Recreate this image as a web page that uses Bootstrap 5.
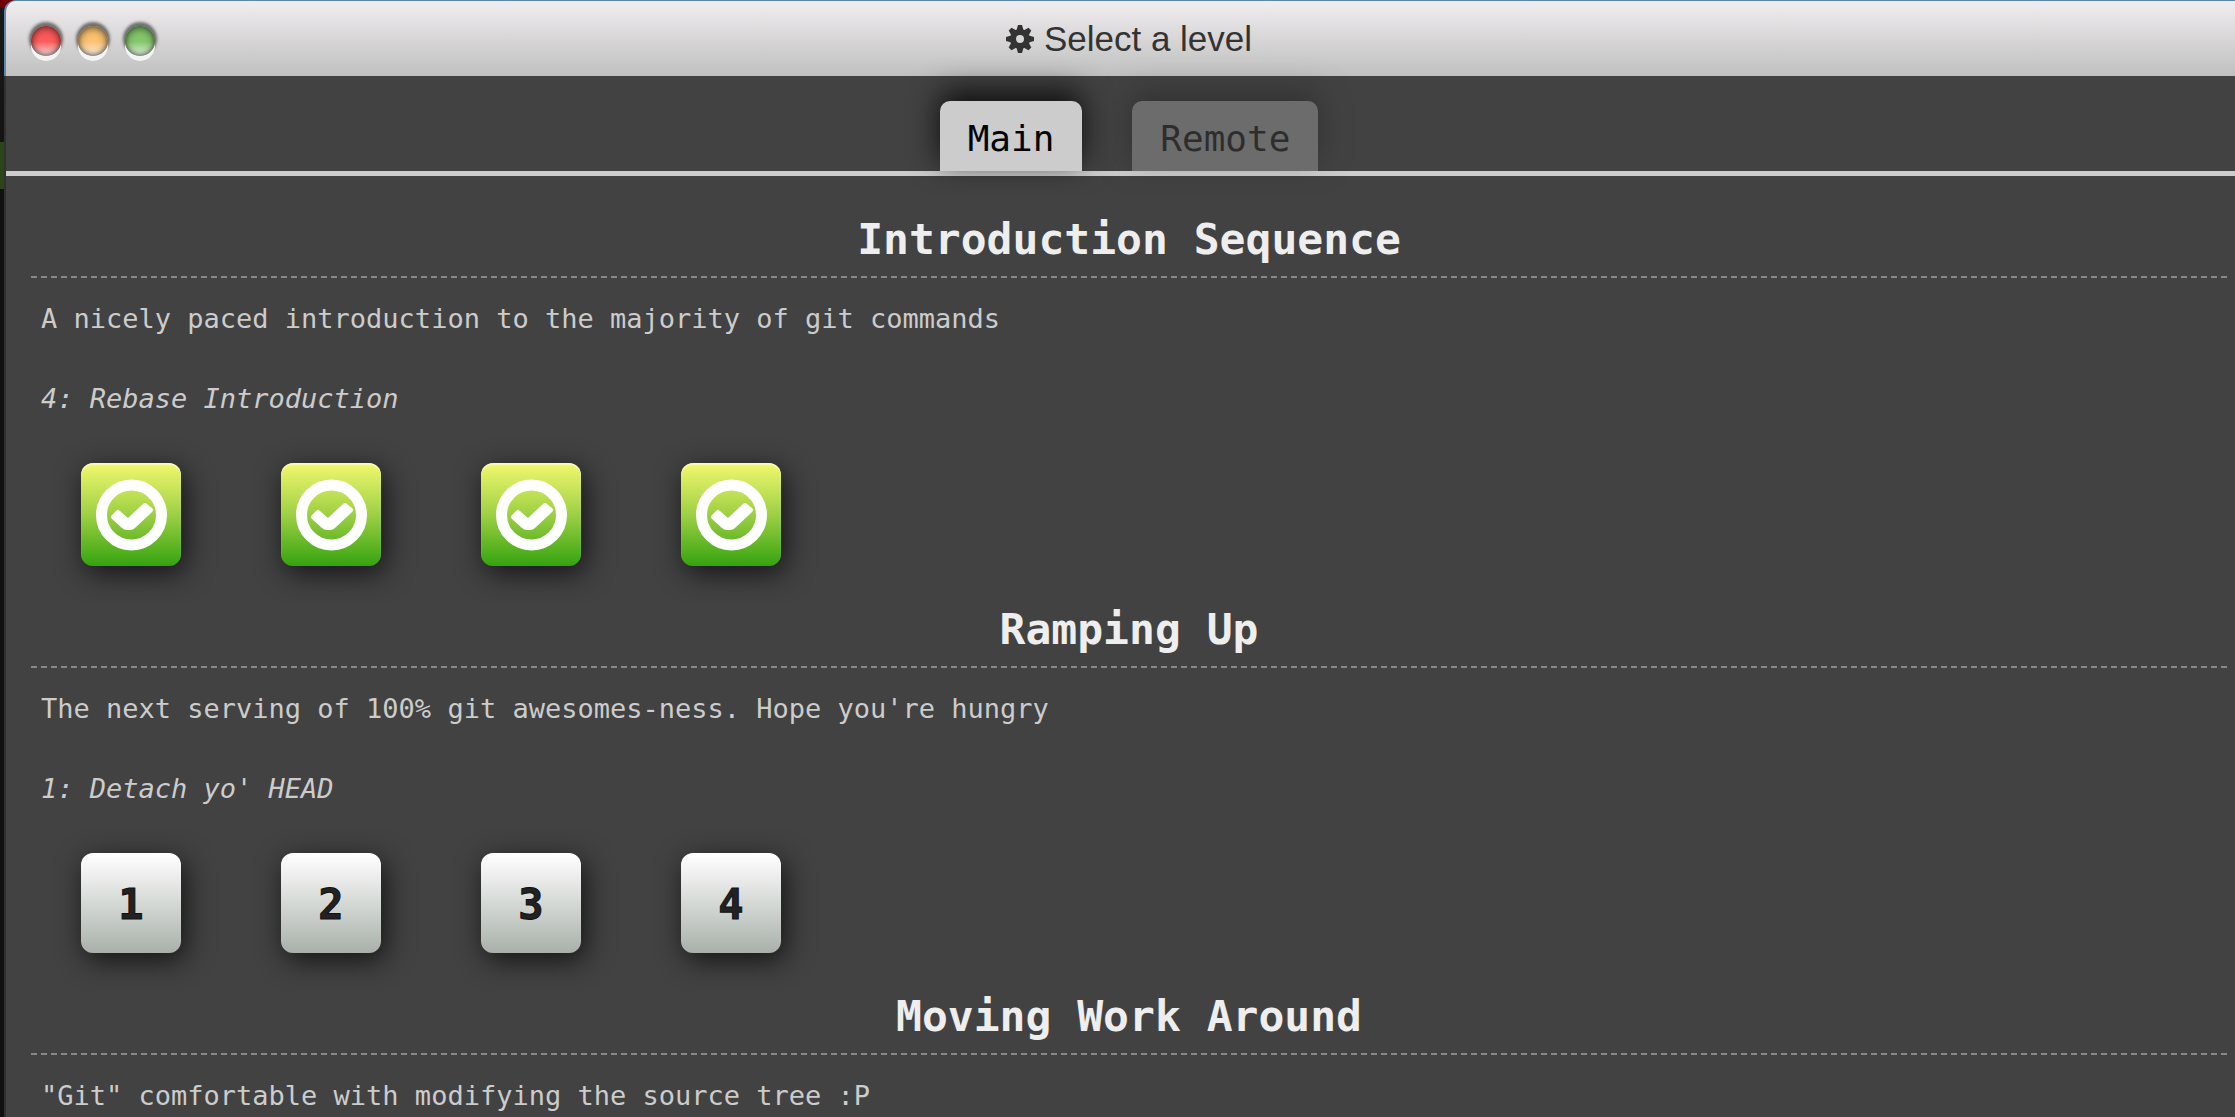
<!DOCTYPE html>
<html lang="en">
<head>
<meta charset="utf-8">
<meta name="viewport" content="width=device-width, initial-scale=1">
<title>Select a level</title>
<link href="https://cdn.jsdelivr.net/npm/bootstrap@5.3.0/dist/css/bootstrap.min.css" rel="stylesheet">
<style>
  body { background: #141414; overflow: hidden; }
  .backdrop { position: absolute; left: 0; top: 0; width: 16px; height: 100%;
    background: linear-gradient(#700000 8px, #191919 8px, #131313 142px, #2b4418 142px, #2b4418 189px, #111 189px); }
  .level-window { margin-left: 4px; margin-right: -17px; position: relative; }
  .title-bar { display: grid; grid-template-columns: 1fr auto 1fr; height: 76px;
    border-top: 1px solid #5f86ad; border-left: 2px solid #5f86ad; border-top-left-radius: 12px;
    background: linear-gradient(#f0edef, #c0c0c0); color: #333; }
  .title-text { font: 35px/40px "Liberation Sans", Arial, sans-serif; gap: 10px; }
  .lights { gap: 17px; padding-left: 25px; padding-top: 4px; }
  .light { width: 30px; height: 30px; border: 0; padding: 0; border-radius: 50%;
    box-shadow: 0 5px 0 #f4f4f4, 0 -2px 3px 2px rgba(0,0,0,.5), inset 0 2px 8px rgba(0,0,0,.55), inset 0 -1px 4px rgba(0,0,0,.4); }
  .light-close { background: linear-gradient(#ff5b5b 52%, #f4e4e4); }
  .light-min { background: linear-gradient(#fcc272 52%, #f4eee4); }
  .light-max { background: linear-gradient(#84c86c 52%, #e8f0e4); }
  .pane { background: #424242; border-left: 2px solid #303030; min-height: calc(100vh - 76px); }
  .mono { font-family: "DejaVu Sans Mono", monospace; }
  .tab-row { border-bottom: 5px solid #ccc; padding-top: 25px; gap: 50px; }
  .level-tab { border: 0; background: #ccc; color: #000; font-size: 36px; line-height: 54px; padding: 11px 28px 5px;
    border-radius: 10px 10px 0 0; box-shadow: 0 -9px 30px rgba(0,0,0,.8); }
  .level-tab.inactive { opacity: .3; }
  .sequence { padding: 34px 25px 0; }
  .sequence h2 { font-size: 43px; line-height: 58px; font-weight: 700; color: #eee;
    border-bottom: 2px dashed #888; padding-bottom: 8px; margin-bottom: 21px; }
  .sequence p { font-size: 27px; line-height: 40px; color: #ccc; margin: 0 0 40px; padding-left: 10px; }
  .sequence p.current { margin-bottom: 44px; }
  .tiles { gap: 100px; padding-left: 50px; }
  .tile { width: 100px; height: 100px; border: 0; padding: 2px 0 0; border-radius: 12px; font-size: 42px; font-weight: 700;
    color: #222; -webkit-text-stroke: 1px #111; background: linear-gradient(#fff, #eee 22%, #d0d5d1 55%, #a9b0a9);
    box-shadow: 4px 7px 28px rgba(0,0,0,.7); }
  .tile.solved { height: 103px; padding: 0; background: linear-gradient(#f2f86e, #9ed044 50%, #35a310);
    box-shadow: inset 0 2px 1px rgba(255,255,255,.5), 4px 7px 28px rgba(0,0,0,.7); }
</style>
<script src="https://cdn.jsdelivr.net/npm/bootstrap@5.3.0/dist/js/bootstrap.bundle.min.js"></script>
</head>
<body>
<svg class="d-none" xmlns="http://www.w3.org/2000/svg">
  <symbol id="check" viewBox="0 0 72 72">
    <circle cx="36.500" cy="36" r="30" fill="none" stroke="#fff" stroke-width="11"/>
    <path d="M21 32Q23 30 25 32L33 39 48 25Q50 23 52 25L57 29Q59 31 57 33L40 49Q38 51 35 51H32Q29 51 27 49L17 40Q15 38 17 36Z" fill="#fff"/>
  </symbol>
</svg>
<div class="backdrop"></div>
<div class="level-window">
  <header class="title-bar align-items-center">
    <div class="lights d-flex">
      <button type="button" class="light light-close" aria-label="Close"></button>
      <button type="button" class="light light-min" aria-label="Minimize"></button>
      <button type="button" class="light light-max" aria-label="Maximize"></button>
    </div>
    <div class="title-text d-flex align-items-center">
      <svg width="28" height="28" viewBox="-14 -14 28 28" aria-hidden="true">
        <g fill="#333">
          <path id="teeth" d="M-2-14H2L4-7H-4ZM-2 14H2L4 7H-4ZM-14-2V2L-7 4V-4ZM14-2V2L7 4V-4Z"/>
          <use href="#teeth" transform="rotate(45)"/>
        </g>
        <circle r="7" fill="none" stroke="#333" stroke-width="6"/>
      </svg>
      <span>Select a level</span>
    </div>
  </header>
  <main class="pane mono">
    <nav class="tab-row d-flex justify-content-center">
      <button type="button" class="level-tab">Main</button>
      <button type="button" class="level-tab inactive">Remote</button>
    </nav>
    <section class="sequence">
      <h2 class="text-center">Introduction Sequence</h2>
      <p>A nicely paced introduction to the majority of git commands</p>
      <p class="current fst-italic">4: Rebase Introduction</p>
      <div class="tiles d-flex">
        <button type="button" class="tile solved" aria-label="Level 1, solved"><svg width="72" height="72"><use href="#check"/></svg></button>
        <button type="button" class="tile solved" aria-label="Level 2, solved"><svg width="72" height="72"><use href="#check"/></svg></button>
        <button type="button" class="tile solved" aria-label="Level 3, solved"><svg width="72" height="72"><use href="#check"/></svg></button>
        <button type="button" class="tile solved" aria-label="Level 4, solved"><svg width="72" height="72"><use href="#check"/></svg></button>
      </div>
    </section>
    <section class="sequence">
      <h2 class="text-center">Ramping Up</h2>
      <p>The next serving of 100% git awesomes-ness. Hope you're hungry</p>
      <p class="current fst-italic">1: Detach yo' HEAD</p>
      <div class="tiles d-flex">
        <button type="button" class="tile">1</button>
        <button type="button" class="tile">2</button>
        <button type="button" class="tile">3</button>
        <button type="button" class="tile">4</button>
      </div>
    </section>
    <section class="sequence">
      <h2 class="text-center">Moving Work Around</h2>
      <p>"Git" comfortable with modifying the source tree :P</p>
    </section>
  </main>
</div>
</body>
</html>
